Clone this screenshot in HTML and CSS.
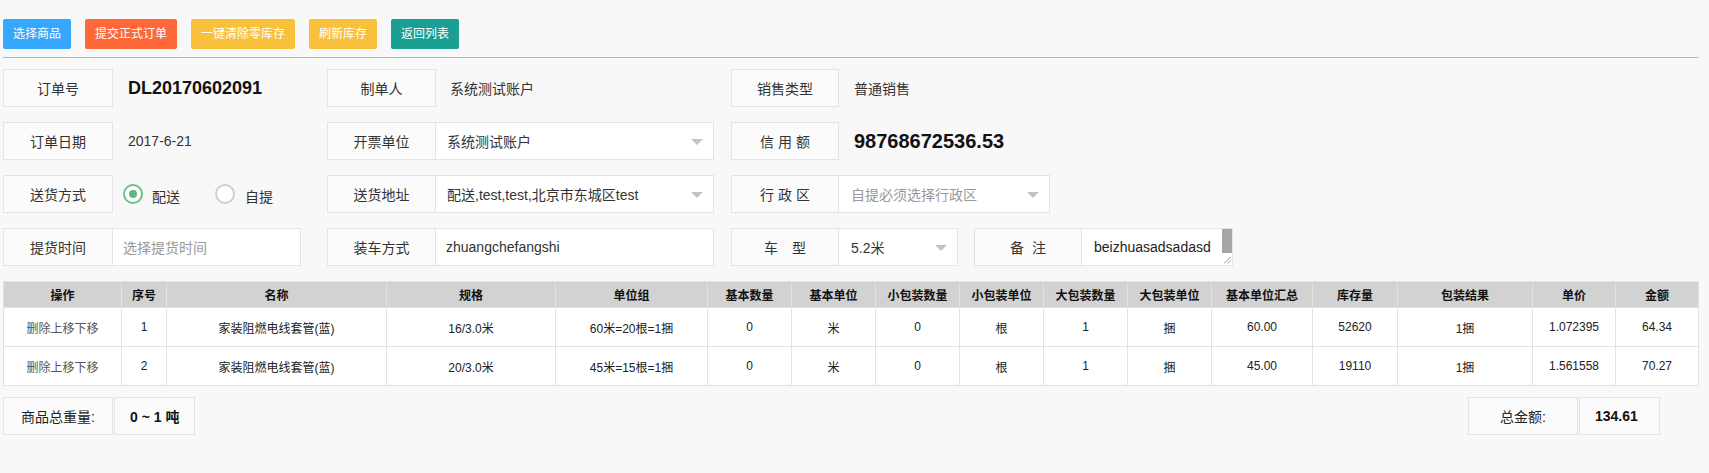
FILE: index.html
```html
<!DOCTYPE html>
<html lang="zh-CN">
<head>
<meta charset="utf-8">
<title>销售订单</title>
<link rel="stylesheet" href="styles.css">
</head>
<body>
<div class="page">
  <div class="toolbar">
    <button class="btn btn-blue">选择商品</button>
    <button class="btn btn-red">提交正式订单</button>
    <button class="btn btn-yellow">一键清除零库存</button>
    <button class="btn btn-yellow">刷新库存</button>
    <button class="btn btn-teal">返回列表</button>
  </div>
  <div class="divider"></div>

  <div class="form">
    <div class="row">
      <div class="grp c1"><div class="lbl">订单号</div><div class="val big">DL20170602091</div></div>
      <div class="grp c2"><div class="lbl">制单人</div><div class="val v2">系统测试账户</div></div>
      <div class="grp c3"><div class="lbl">销售类型</div><div class="val">普通销售</div></div>
    </div>
    <div class="row">
      <div class="grp c1"><div class="lbl">订单日期</div><div class="val">2017-6-21</div></div>
      <div class="grp c2"><div class="lbl">开票单位</div><div class="ctl sel"><span class="txt">系统测试账户</span><span class="caret"></span></div></div>
      <div class="grp c3"><div class="lbl">信 用 额</div><div class="val huge">98768672536.53</div></div>
    </div>
    <div class="row">
      <div class="grp c1"><div class="lbl">送货方式</div>
        <div class="radios">
          <div class="radio on"><span class="dot"></span><span>配送</span></div>
          <div class="radio"><span class="dot"></span><span>自提</span></div>
        </div>
      </div>
      <div class="grp c2"><div class="lbl">送货地址</div><div class="ctl sel"><span class="txt">配送,test,test,北京市东城区test</span><span class="caret"></span></div></div>
      <div class="grp c3"><div class="lbl">行 政 区</div><div class="ctl sel sel3"><span class="txt ph">自提必须选择行政区</span><span class="caret"></span></div></div>
    </div>
    <div class="row">
      <div class="grp c1"><div class="lbl">提货时间</div><div class="ctl inp"><span class="txt ph">选择提货时间</span></div></div>
      <div class="grp c2"><div class="lbl">装车方式</div><div class="ctl inp"><span class="txt">zhuangchefangshi</span></div></div>
      <div class="grp c3s"><div class="lbl">车　型</div><div class="ctl sel sel3"><span class="txt">5.2米</span><span class="caret"></span></div></div>
      <div class="grp c4"><div class="lbl">备&nbsp;&nbsp;注</div>
        <div class="ctl area">
          <span class="txt dark">beizhuasadsadasd</span>
          <div class="sbar">
            <div class="thumb"></div>
            <svg class="grip" width="8" height="8" viewBox="0 0 8 8"><path d="M1 7.5 L7.5 1 M4.5 7.5 L7.5 4.5" stroke="#9a9a9a" stroke-width="1" fill="none"/></svg>
          </div>
        </div>
      </div>
    </div>
  </div>

  <table class="grid">
    <colgroup>
      <col style="width:118px"><col style="width:45px"><col style="width:220px"><col style="width:169px">
      <col style="width:152px"><col style="width:84px"><col style="width:84px"><col style="width:84px">
      <col style="width:84px"><col style="width:84px"><col style="width:84px"><col style="width:101px">
      <col style="width:85px"><col style="width:135px"><col style="width:83px"><col style="width:83px">
    </colgroup>
    <thead>
      <tr>
        <th>操作</th><th>序号</th><th>名称</th><th>规格</th><th>单位组</th><th>基本数量</th><th>基本单位</th><th>小包装数量</th>
        <th>小包装单位</th><th>大包装数量</th><th>大包装单位</th><th>基本单位汇总</th><th>库存量</th><th>包装结果</th><th>单价</th><th>金额</th>
      </tr>
    </thead>
    <tbody>
      <tr>
        <td class="op">删除上移下移</td><td>1</td><td>家装阻燃电线套管(蓝)</td><td>16/3.0米</td><td>60米=20根=1捆</td><td>0</td><td>米</td><td>0</td>
        <td>根</td><td>1</td><td>捆</td><td>60.00</td><td>52620</td><td>1捆</td><td>1.072395</td><td>64.34</td>
      </tr>
      <tr>
        <td class="op">删除上移下移</td><td>2</td><td>家装阻燃电线套管(蓝)</td><td>20/3.0米</td><td>45米=15根=1捆</td><td>0</td><td>米</td><td>0</td>
        <td>根</td><td>1</td><td>捆</td><td>45.00</td><td>19110</td><td>1捆</td><td>1.561558</td><td>70.27</td>
      </tr>
    </tbody>
  </table>

  <div class="footer">
    <div class="sum"><div class="lbl">商品总重量:</div><div class="num">0 ~ 1 吨</div></div>
    <div class="sum"><div class="lbl">总金额:</div><div class="num">134.61</div></div>
  </div>
</div>
</body>
</html>
```

FILE: styles.css
```css
* { box-sizing: border-box; }
html, body { margin: 0; padding: 0; }
body {
  background: #f8f8f8;
  font-family: "Liberation Sans", "Noto Sans CJK SC", sans-serif;
  color: #333;
  font-size: 14px;
}
.page { width: 1709px; padding: 19px 11px 0 3px; }

.toolbar { display: flex; gap: 14px; }
.btn {
  height: 30px;
  padding: 0 10px;
  border: 0;
  border-radius: 2px;
  color: #fff;
  font-size: 12px;
  font-family: inherit;
  line-height: 30px;
}
.btn-blue { background: #35a8fe; }
.btn-red { background: #fe6839; }
.btn-yellow { background: #f8c03b; }
.btn-teal { background: #1aa093; }

.divider { height: 1px; background: #72d0d6; margin: 8px 0 11px; }

.row { display: flex; height: 38px; margin-bottom: 15px; }
.row:last-child { margin-bottom: 0; }
.grp { display: flex; height: 38px; }
.c1 { width: 298px; margin-right: 26px; }
.c2 { width: 387px; margin-right: 17px; }
.c3 { width: 319px; }
.c3s { width: 227px; margin-right: 16px; }
.c4 { width: 259px; }

.lbl {
  width: 109px;
  flex: none;
  border: 1px solid #e4e4e4;
  background: #fbfbfb;
  display: flex;
  align-items: center;
  justify-content: center;
  white-space: pre;
}
.c1 .lbl { width: 110px; }
.c3 .lbl, .c3s .lbl, .c4 .lbl { width: 108px; }

.val { flex: 1; display: flex; align-items: center; padding-left: 15px; color: #333; }
.val.v2 { padding-left: 14px; }
.val.big { font-size: 18px; font-weight: bold; color: #111; }
.val.huge { font-size: 20px; font-weight: bold; color: #111; }

.ctl {
  flex: 1;
  min-width: 0;
  display: flex;
  align-items: center;
  background: #fff;
  border: 1px solid #e4e4e4;
  border-left: 0;
  padding: 0 10px;
}
.ctl.sel { padding-left: 11px; }
.ctl.sel3 { padding-left: 12px; }
.ctl .txt { flex: 1; white-space: nowrap; overflow: hidden; color: #333; }
.ctl .txt.ph { color: #999; }
.ctl .txt.dark { color: #222; }
.caret {
  flex: none;
  width: 0;
  height: 0;
  border-left: 6px solid transparent;
  border-right: 6px solid transparent;
  border-top: 6px solid #c4c4c4;
  margin-top: 1px;
}

.radios { display: flex; align-items: center; padding-left: 10px; }
.radio { display: flex; align-items: center; }
.radio + .radio { margin-left: 35px; }
.dot {
  width: 20px;
  height: 20px;
  border-radius: 50%;
  border: 2px solid #cfcfcf;
  background: #fff;
  margin-right: 9px;
  display: flex;
  align-items: center;
  justify-content: center;
}
.radio + .radio .dot { margin-right: 10px; }
.radio.on .dot { border-color: #6cc08a; border-width: 2px; }
.radio.on .dot::after {
  content: "";
  width: 8px;
  height: 8px;
  border-radius: 50%;
  background: #5fb878;
}
.radio span:last-child { padding-top: 3px; }

.ctl.area { padding: 0 0 0 12px; align-items: stretch; }
.ctl.area .txt { display: flex; align-items: center; }
.sbar {
  flex: none;
  width: 10px;
  display: flex;
  flex-direction: column;
  justify-content: space-between;
  align-items: flex-end;
}
.thumb { width: 10px; height: 24px; background: #a6a6a6; }
.grip { display: block; margin: 0 1px 1px 0; }

.grid {
  width: 1695px;
  margin-top: 15px;
  border-collapse: collapse;
  table-layout: fixed;
  font-size: 12px;
  background: #fff;
}
.grid th {
  height: 26px;
  padding: 0;
  background: #d2d2d2;
  color: #111;
  font-weight: bold;
  border: 1px solid #e2e2e2;
  text-align: center;
}
.grid td {
  height: 39px;
  padding: 0;
  text-align: center;
  border: 1px solid #e2e2e2;
  color: #222;
}
.grid td.op { color: #555; }

.footer {
  display: flex;
  justify-content: space-between;
  margin-top: 11px;
  padding-right: 38px;
}
.sum { display: flex; height: 38px; }
.sum .lbl { width: 110px; color: #222; }
.sum .num {
  width: 81px;
  margin-left: 1px;
  border: 1px solid #e4e4e4;
  background: #fbfbfb;
  font-weight: bold;
  color: #111;
  padding-left: 15px;
  display: flex;
  align-items: center;
}
```
